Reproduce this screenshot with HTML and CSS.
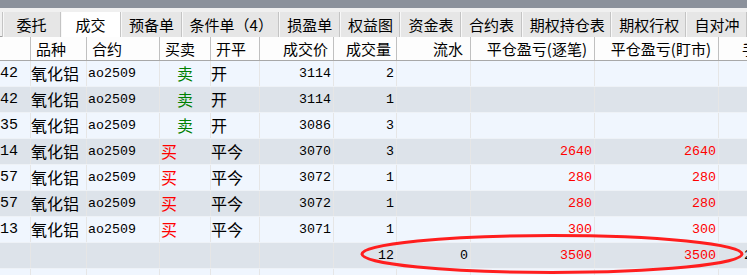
FILE: index.html
```html
<!DOCTYPE html>
<html lang="zh-CN">
<head>
<meta charset="utf-8">
<title>成交</title>
<link rel="stylesheet" href="styles.css">
</head>
<body>
<div class="app">
  <div class="titlebar"></div>
  <div class="tabs">
    <div class="tab first">委托</div>
    <div class="tab active">成交</div>
    <div class="tab">预备单</div>
    <div class="tab">条件单（4）</div>
    <div class="tab">损盈单</div>
    <div class="tab">权益图</div>
    <div class="tab">资金表</div>
    <div class="tab">合约表</div>
    <div class="tab">期权持仓表</div>
    <div class="tab">期权行权</div>
    <div class="tab">自对冲</div>
  </div>
  <div class="grid">
    <div class="row head">
      <div class="c"></div>
      <div class="c l">品种</div>
      <div class="c l">合约</div>
      <div class="c l">买卖</div>
      <div class="c l">开平</div>
      <div class="c r">成交价</div>
      <div class="c r">成交量</div>
      <div class="c r wide">流水</div>
      <div class="c r wide">平仓盈亏(逐笔)</div>
      <div class="c r wide">平仓盈亏(盯市)</div>
      <div class="c last">手续费</div>
    </div>

    <div class="row light">
      <div class="c id">42</div><div class="c cn">氧化铝</div><div class="c code">ao2509</div>
      <div class="c sell">卖</div><div class="c cn">开</div><div class="c num">3114</div>
      <div class="c num">2</div><div class="c num"></div><div class="c num"></div><div class="c num"></div><div class="c"></div>
    </div>
    <div class="row dark">
      <div class="c id">42</div><div class="c cn">氧化铝</div><div class="c code">ao2509</div>
      <div class="c sell">卖</div><div class="c cn">开</div><div class="c num">3114</div>
      <div class="c num">1</div><div class="c num"></div><div class="c num"></div><div class="c num"></div><div class="c"></div>
    </div>
    <div class="row light">
      <div class="c id">35</div><div class="c cn">氧化铝</div><div class="c code">ao2509</div>
      <div class="c sell">卖</div><div class="c cn">开</div><div class="c num">3086</div>
      <div class="c num">3</div><div class="c num"></div><div class="c num"></div><div class="c num"></div><div class="c"></div>
    </div>
    <div class="row dark">
      <div class="c id">14</div><div class="c cn">氧化铝</div><div class="c code">ao2509</div>
      <div class="c buy">买</div><div class="c cn">平今</div><div class="c num">3070</div>
      <div class="c num">3</div><div class="c num"></div><div class="c num red">2640</div><div class="c num red">2640</div><div class="c"></div>
    </div>
    <div class="row light">
      <div class="c id">57</div><div class="c cn">氧化铝</div><div class="c code">ao2509</div>
      <div class="c buy">买</div><div class="c cn">平今</div><div class="c num">3072</div>
      <div class="c num">1</div><div class="c num"></div><div class="c num red">280</div><div class="c num red">280</div><div class="c"></div>
    </div>
    <div class="row dark">
      <div class="c id">57</div><div class="c cn">氧化铝</div><div class="c code">ao2509</div>
      <div class="c buy">买</div><div class="c cn">平今</div><div class="c num">3072</div>
      <div class="c num">1</div><div class="c num"></div><div class="c num red">280</div><div class="c num red">280</div><div class="c"></div>
    </div>
    <div class="row light">
      <div class="c id">13</div><div class="c cn">氧化铝</div><div class="c code">ao2509</div>
      <div class="c buy">买</div><div class="c cn">平今</div><div class="c num">3071</div>
      <div class="c num">1</div><div class="c num"></div><div class="c num red">300</div><div class="c num red">300</div><div class="c"></div>
    </div>
    <div class="row dark">
      <div class="c"></div><div class="c"></div><div class="c"></div>
      <div class="c"></div><div class="c"></div><div class="c"></div>
      <div class="c num">12</div><div class="c num">0</div><div class="c num red">3500</div><div class="c num red">3500</div><div class="c tail">2</div>
    </div>
    <div class="row light">
      <div class="c"></div><div class="c"></div><div class="c"></div>
      <div class="c"></div><div class="c"></div><div class="c"></div>
      <div class="c"></div><div class="c"></div><div class="c"></div><div class="c"></div><div class="c"></div>
    </div>
  </div>
  <svg class="mark" width="747" height="275" viewBox="0 0 747 275">
    <ellipse cx="552" cy="254" rx="190" ry="18.5" fill="none" stroke="#ff1e1e" stroke-width="3"/>
  </svg>
</div>
</body>
</html>
```

FILE: styles.css
```css
html, body {
  margin: 0;
  padding: 0;
  background: #f0f0f0;
}

.app {
  position: relative;
  width: 747px;
  height: 275px;
  overflow: hidden;
  font-family: "Noto Sans CJK SC", "Liberation Sans", sans-serif;
  color: #000;
}

.titlebar {
  height: 8px;
  background: #8b919b;
}

.tabs {
  display: flex;
  height: 29px;
  padding-top: 4px;
  box-sizing: border-box;
  background: #f0f0f0;
  border-bottom: 1px solid #a0a0a0;
}

.tab {
  min-width: 59px;
  padding: 2px 8px 0;
  box-sizing: border-box;
  height: 25px;
  line-height: 22px;
  font-size: 15px;
  text-align: center;
  background: #e6e6e6;
  border-right: 1px solid #c4c4c4;
  box-shadow: inset 1px 0 0 #f8f8f8;
  white-space: nowrap;
}

.tab.first {
  margin-left: 2px;
  border-left: 1px solid #c4c4c4;
}

.tab.active {
  background: #ffffff;
  min-width: 60px;
}

.grid {
  width: 747px;
  overflow: hidden;
}

.row {
  display: grid;
  grid-template-columns: 31px 56px 73px 51px 49px 74px 63px 74px 124px 124px 80px;
  height: 26px;
  box-sizing: border-box;
  border-bottom: 1px solid #eef2f7;
}

.row.light { background: #f0f6fe; }
.row.dark { background: #dde3ea; }

.row.head {
  height: 24px;
  background: #fdfdfd;
  border-bottom: 1px solid #a8a8a8;
}

.c {
  border-right: 1px solid #e6e6e6;
  white-space: nowrap;
  overflow: hidden;
  line-height: 25px;
  font-size: 16px;
}

.head .c {
  border-right-color: #c0c0c0;
  font-size: 15px;
  line-height: 23px;
}

.head .l { padding-left: 5px; }
.head .r { text-align: right; padding-right: 5px; }
.head .wide { padding-right: 7px; }
.head .last { padding-left: 23px; border-right: none; }

.cn { padding-left: 0; }

.code {
  font-family: "Liberation Mono", "DejaVu Sans Mono", monospace;
  font-size: 13.3px;
  padding-left: 1px;
}

.id {
  font-family: "Liberation Mono", "DejaVu Sans Mono", monospace;
  font-size: 15px;
  text-align: right;
  padding-right: 17px;
}

.num {
  font-family: "Liberation Mono", "DejaVu Sans Mono", monospace;
  font-size: 13.3px;
  text-align: right;
  padding-right: 2px;
}

.tail {
  font-family: "Liberation Mono", "DejaVu Sans Mono", monospace;
  font-size: 13.3px;
  padding-left: 25px;
  border-right: none;
}

.red { color: #ff0000; }

.sell {
  color: #008000;
  padding-left: 17px;
}

.buy {
  color: #ff0000;
  padding-left: 1px;
}

.mark {
  position: absolute;
  left: 0;
  top: 0;
  pointer-events: none;
}
```
